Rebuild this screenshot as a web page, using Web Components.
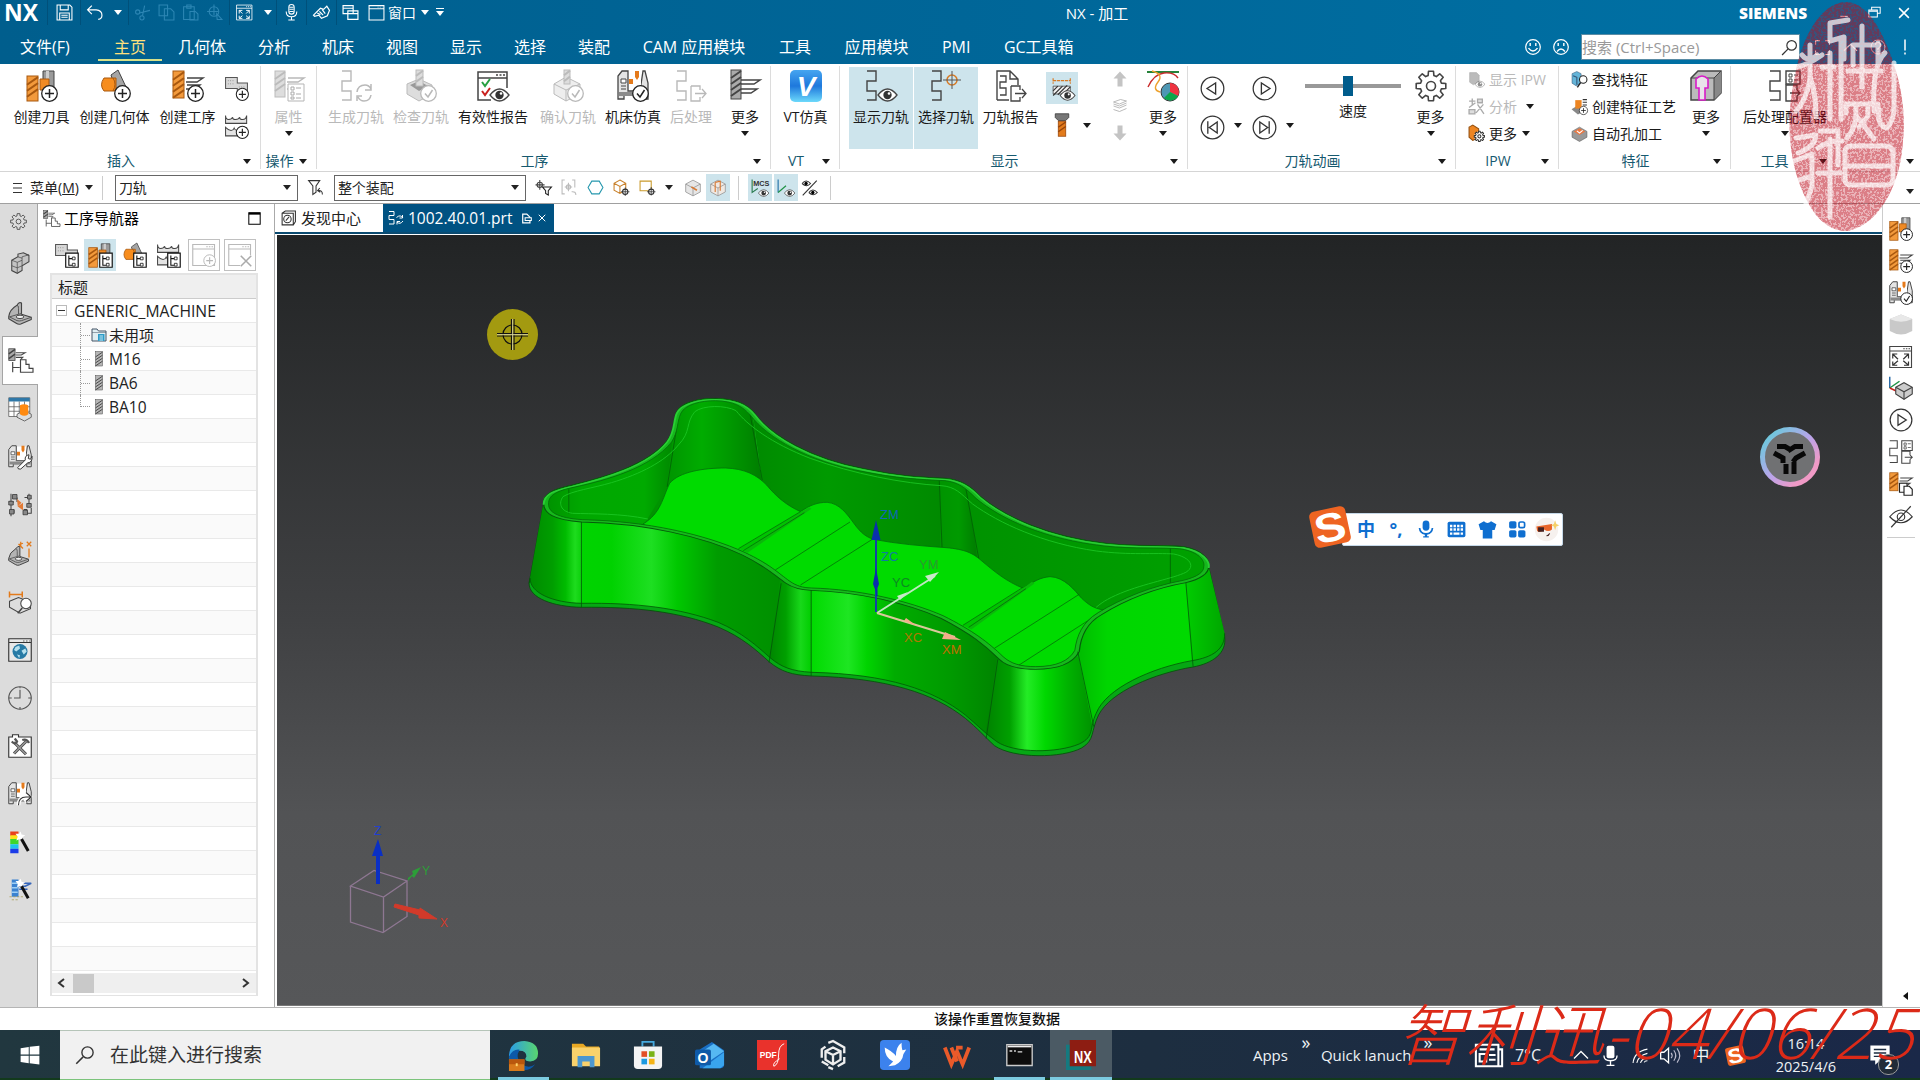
<!DOCTYPE html>
<html lang="zh-CN">
<head>
<meta charset="utf-8">
<title>NX - 加工</title>
<style>
  html, body { margin: 0; height: 1080px; overflow: hidden; }
  body {
    width: 1920px;
    display: flex;
    flex-direction: column;
    position: relative;
    background: #fff;
    color: #1a1a1a;
    font: 14px/20px "Open Sans", "Noto Sans CJK SC", sans-serif;
    white-space: nowrap;
  }
  main { display: flex; height: 803px; }
  .doc { width: 1608px; display: flex; flex-direction: column; border-left: 1px solid #aaa; box-sizing: border-box; }
</style>
</head>
<body>
  <nx-titlebar></nx-titlebar>
  <nx-menu-tabs></nx-menu-tabs>
  <nx-ribbon></nx-ribbon>
  <nx-selection-bar></nx-selection-bar>
  <main>
    <nx-resource-rail></nx-resource-rail>
    <nx-navigator></nx-navigator>
    <div class="doc">
      <nx-doc-tabs></nx-doc-tabs>
      <nx-viewport></nx-viewport>
    </div>
    <nx-side-rail></nx-side-rail>
  </main>
  <nx-status>该操作重置恢复数据</nx-status>
  <win-taskbar></win-taskbar>
  <nx-seal></nx-seal>
  <nx-watermark></nx-watermark>

<script>
// registers an element whose shadow root holds the given style and markup
function define(name, css, html) {
  customElements.define(name, class extends HTMLElement {
    constructor() {
      super();
      this.attachShadow({ mode: "open" });
      this.shadowRoot.innerHTML = `<style>${css}</style>${html}`;
    }
  });
}

// ---- icon parts, all on a 32 x 32 grid ----
const drill = (x, y, w, h, c = "#f39a3c", d = "#a8580f") => {
  let s = `<rect x="${x}" y="${y}" width="${w}" height="${h}" fill="${c}" stroke="${d}"/>`;
  for (let k = y + w * .7; k < y + h - 1; k += 6) s += `<path d="M${x} ${k + 1}L${x + w} ${k - w * .6}" stroke="${d}" stroke-width="2"/>`;
  return s;
};
const L = "#b9b9b9";
const badge = (inner, c = "#222") => `<circle cx="23.500" cy="23.500" r="7.800" fill="#fff" stroke="${c}" stroke-width="1.300"/><g stroke="${c}" stroke-width="1.500" fill="none">${inner}</g>`;
const plus = badge('<path d="M23.500 19v9M19 23.500h9"/>');
const check = badge('<path d="M20 23.500l3 3.500 4.500-7"/>');
const checkL = badge('<path d="M20 23.500l3 3.500 4.500-7"/>', L);
const eye = '<path d="M13 25q9.500-12 19 0q-9.500 12-19 0z" fill="#fff" stroke="#444" stroke-width="1.300"/><circle cx="22.500" cy="25" r="4.200" fill="#333"/><circle cx="24" cy="23.500" r="1.300" fill="#fff"/>';
const snake = (c = "#444") => `<path d="M2 1h9v10H2v10h9v9H2M2 30h9" fill="none" stroke="${c}" stroke-width="1.400"/>`;
const lines = (c = "#444") => `<path d="M15 8h16l-6 4H14M15 15h13l-5 4h-9" fill="none" stroke="${c}" stroke-width="1.400"/>`;
const holder = '<path d="M17 1h11v17H17z" fill="#9a9a9a" stroke="#444"/><path d="M20 1h3v17h-3z" fill="#ccc"/><path d="M14 9h9v11h-9z" fill="#f08a24" stroke="#a8580f"/>';
const part = '<path d="M12 5l7-5 8 17-5 7-5-3z" fill="#a5a5a5" stroke="#444"/><path d="M5 8h12v13H5q-5-6 0-13z" fill="#f78d1e" stroke="#a8580f"/><path d="M14 8q4 6 0 13" fill="none" stroke="#a8580f"/>';
const blocks = '<path d="M2 2h15v7h13v14H17v-7H2z" fill="#d7d7d7" stroke="#555" stroke-width="1.300"/><path d="M5 6h9M5 10h9M19 14h8M19 18h8" stroke="#777" stroke-dasharray="1 2"/>';
const wave = '<path d="M2 2v10h27V2q-1 5-5 5t-4-3q-1 3-5 3t-4-3q-1 3-5 3T2 2zM2 17v11h27V17q-1 4-4 4t-4-3q-1 3-4 3t-4-3q-1 3-4 3T2 17z" fill="#e4e4e4" stroke="#444" stroke-width="1.300"/>';
const machine = (c = "#444", o = "#e57a1a") => `<path d="M1 29V6l4-5h6v20h12l3-20h2l3 12v16h-6v-4H7v4z" fill="#e4e4e4" stroke="${c}" stroke-width="1.300"/><path d="M12 2h12v18H12z" fill="#fff"/><path d="M2 22h28v4H2z" fill="#8a8a8a"/><path d="M4 9h5v4H4zM4 16h5M4 19h5" fill="#fff" stroke="${c}"/><path d="M12 9h4v5h-4zM18 1h4v6l-2 3-2-3z" fill="${o}"/>`;
const tree = '<path d="M15 13h16v18H15z" fill="#fff" stroke="#111" stroke-width="1.500"/><path d="M19 16v12.500h4M19 20h4" fill="none" stroke="#111" stroke-width="1.400"/><path d="M23.500 18h3.500v3.500h-3.500zM23.500 26h3.500v3.500h-3.500z" fill="none" stroke="#111"/>';
const exportBox = (c = "#444") => `<path d="M16 16h9v4M25 27v4h-9V16" fill="none" stroke="${c}" stroke-width="1.300"/><path d="M20 23.500h11M27 19l4 4.500-4 4.500" fill="none" stroke="${c}" stroke-width="1.300"/>`;
const win = (c = "#444") => `<path d="M1 2h29v28H1zM1 8h29" fill="none" stroke="${c}" stroke-width="1.500"/><path d="M19 5h9" stroke="${c}" stroke-width="1.500" stroke-dasharray="2 1.500"/>`;
const cube = (f = "#cfcfcf", c = "#555") => `<path d="M16 2l13 7v14l-13 7-13-7V9z" fill="${f}" stroke="${c}" stroke-width="1.500"/><path d="M3 9l13 7 13-7M16 16v14" fill="none" stroke="${c}" stroke-width="1.500"/>`;
const ring = p => `<circle cx="16" cy="16" r="14.500" fill="none" stroke="#333" stroke-width="1.600"/><path d="${p}" fill="none" stroke="#333" stroke-width="1.700"/>`;
const bracket = '<path d="M1 22Q2 13 12 7q3-5 6-3v15l13 4v3l-14 6q-3 1-6-1L1 25z" fill="#b4b4b4" stroke="#444" stroke-width="1.500" stroke-linejoin="round"/><path d="M12 7q2 0 2 4v8L2 22.500M14 19l4-1M2 22.500l10 5q3 1 6 0l13-4.500" fill="none" stroke="#555" stroke-width="1.300"/><ellipse cx="16" cy="22.500" rx="5" ry="2.300" fill="#eee" stroke="#444" stroke-width="1.300"/>';
const gear = (c = "#444", w = 1.600) => {
  const p = [];
  for (let i = 0; i < 8; i++) for (const [da, r] of [[-.27, 10.800], [-.17, 15], [.17, 15], [.27, 10.800]]) {
    const a = i * Math.PI / 4 + da;
    p.push((16 + r * Math.cos(a)).toFixed(1) + "," + (16 + r * Math.sin(a)).toFixed(1));
  }
  return `<polygon points="${p.join(" ")}" fill="none" stroke="${c}" stroke-width="${w}" stroke-linejoin="round"/><circle cx="16" cy="16" r="4.500" fill="none" stroke="${c}" stroke-width="${w}"/>`;
};

const icons = {
  save: '<path d="M2 2h24l4 4v24H2zM8 2v9h15V2M7 30V17h18v13M10 21h12M10 25h12" fill="none" stroke="#fff" stroke-width="2"/>',
  undo: '<path d="M11 3L3 11l8 8M3 11h16q11 1 11 10 0 7-7 8" fill="none" stroke="#fff" stroke-width="2.200"/>',
  cut: '<g fill="none" stroke="#2c86b4" stroke-width="2"><circle cx="7" cy="15" r="4"/><circle cx="15" cy="26" r="4"/><path d="M10 17l20-5M16 22L20 3"/></g>',
  copy: '<path d="M2 2h16v20H2zM12 9h12l6 6v15H12z" fill="#00618f" stroke="#2c86b4" stroke-width="2"/>',
  paste: '<path d="M3 5h20v24H3zM9 2h8v6H9zM15 14h10l5 5v11H15z" fill="#00618f" stroke="#2c86b4" stroke-width="2"/>',
  target: '<g fill="none" stroke="#2c86b4" stroke-width="2"><circle cx="15" cy="14" r="9"/><path d="M15 1v20M2 14h22M20 18l10 11h-9z"/></g>',
  fitw: win("#fff") + '<path d="M12 12H6v6M6 12l6 6M19 12h6v6M25 12l-6 6M12 27H6v-5M6 27l6-5M19 27h6v-5M25 27l-6-5" fill="none" stroke="#fff" stroke-width="1.800"/>',
  mic: '<rect x="11" y="1" width="10" height="18" rx="5" fill="none" stroke="#fff" stroke-width="2"/><path d="M12 6h8M12 10h8M12 14h8M6 14q0 10 10 10t10-10M16 24v6M10 30h12" fill="none" stroke="#fff" stroke-width="2"/>',
  touch: '<path d="M1 21l13-13 6 2 6-6 5 8-4 10-11 5-5-6-8 2z" fill="none" stroke="#fff" stroke-width="2.300"/><path d="M12 14l7 7M17 10l6 8M8 17l6 3" stroke="#fff" stroke-width="2.300"/>',
  windows: '<path d="M2 3h19v15H2zM2 8h19M11 13h19v16H11zM11 18h19" fill="#006496" stroke="#fff" stroke-width="2.200"/>',
  window: '<path d="M2 3h28v27H2zM2 9h28" fill="none" stroke="#fff" stroke-width="2"/><path d="M18 6h9" stroke="#fff" stroke-dasharray="2"/>',
  smile: '<circle cx="16" cy="16" r="13" fill="none" stroke="#fff" stroke-width="2.200"/><path d="M11 9v5M21 9v5M8 18q8 10 16 0" fill="none" stroke="#fff" stroke-width="2.500"/>',
  sad: '<circle cx="16" cy="16" r="13" fill="none" stroke="#fff" stroke-width="2.200"/><path d="M11 9v5M21 9v5M9 24q7-9 14 0" fill="none" stroke="#fff" stroke-width="2.500"/>',
  search: '<circle cx="20" cy="12" r="9" fill="none" stroke="currentColor" stroke-width="2.200"/><path d="M13 19L2 30" stroke="currentColor" stroke-width="2.400"/>',
  full: '<path d="M3 11V3h8M21 3h8v8M29 21v8h-8M11 29H3v-8" fill="none" stroke="#fff" stroke-width="2"/>',
  caretup: '<path d="M2 23L16 9l14 14" fill="none" stroke="#fff" stroke-width="2.500"/>',
  help: '<circle cx="16" cy="16" r="14" fill="none" stroke="#fff" stroke-width="2"/><path d="M11 12q0-5 5-5t5 5-5 7v3M16 24v3" fill="none" stroke="#fff" stroke-width="2.300"/>',
  bang: '<path d="M16 1v22M16 27v4" stroke="#fff" stroke-width="3"/>',
  minimise: '<path d="M6 25h20" stroke="#fff" stroke-width="3"/>',
  restore: '<path d="M9 9V3h21v15h-6M2 10h21v17H2zM2 13h21" fill="none" stroke="#fff" stroke-width="2.500"/>',
  close: '<path d="M3 3l26 26M29 3L3 29" stroke="#fff" stroke-width="4"/>',

  newtool: holder + drill(1, 6, 11, 25) + plus,
  newgeom: part + plus,
  newop: drill(1, 1, 11, 27) + lines() + plus,
  newprog: blocks + plus,
  newmethod: wave + plus,
  props: drill(2, 1, 10, 26, "#ddd", "#bbb") + lines(L) + '<path d="M15 14h16v17H15z" fill="#fff" stroke="#b5b5b5"/><path d="M18 17h3v3h-3zM18 22h3v3h-3zM18 27h3v2h-3zM23 18h5M23 24h5M23 28h5" fill="none" stroke="#aaa"/>',
  generate: snake(L) + '<path d="M17 22q1-7 8-7 4 0 6 4M31 14v6h-6M31 25q-1 6-7 6-4 0-6-4M17 31v-5h5" fill="none" stroke="#b9b9b9" stroke-width="1.500"/>',
  checkpath: '<path d="M2 14l12-5 13 6v9l-13 7-12-7z" fill="#ddd" stroke="#bbb"/><path d="M5 15l9-4 9 5-9 5z" fill="#999"/>' + drill(11, 0, 7, 16, "#ddd", "#bbb") + checkL,
  report: win() + '<path d="M5 12l3 4 5-7" fill="none" stroke="#26a042" stroke-width="2"/><path d="M5 21l3 4 5-7" fill="none" stroke="#c9211e" stroke-width="2"/><path d="M14 18h18v14H14z" fill="#fff"/>' + eye,
  verify: '<path d="M2 14l12-7 14 7v10l-14 7-12-7z" fill="#eee" stroke="#bbb"/><path d="M2 14l12 6 14-6M14 20v11" fill="none" stroke="#bbb"/>' + drill(12, 0, 6, 14, "#ddd", "#bbb") + checkL,
  machine: machine() + check,
  post: snake(L) + exportBox(L),
  moreop: drill(2, 0, 10, 29, "#aaa", "#444") + '<path d="M12 10h19l-6 4H12M12 19h16l-6 4H12" fill="none" stroke="#444" stroke-width="1.500"/>',
  vt: '<defs><linearGradient id="v" x1="0" y1="0" x2="0" y2="1"><stop offset="0" stop-color="#46a5f0"/><stop offset=".5" stop-color="#1e78dc"/><stop offset="1" stop-color="#6cd9fb"/></linearGradient></defs><rect width="32" height="32" rx="5" fill="url(#v)"/><text x="16" y="26" text-anchor="middle" font-family="Liberation Sans" font-size="28" font-weight="bold" font-style="italic" fill="#fff">V</text>',
  showpath: snake() + eye,
  pickpath: snake() + '<circle cx="22" cy="10" r="5" fill="none" stroke="#d77a25" stroke-width="1.500"/><path d="M22 1v18M13 10h18" stroke="#555"/>',
  pathreport: '<path d="M2 30V1h13l8 8v6M15 1v8h8M2 30h12" fill="none" stroke="#444" stroke-width="1.400"/><path d="M5 6h6v6H5v6h6v7H5" fill="none" stroke="#444" stroke-width="1.300"/>' + exportBox(),
  hatch: '<path d="M4 6h22M4 3v7M26 3v7" stroke="#d77a25" stroke-width="1.500" stroke-dasharray="4 1"/><path d="M4 13h22v10H4z" fill="#f2f2f2" stroke="#444"/><path d="M4 19l6-6M4 25l12-12M10 24l12-12M20 20l6-6" stroke="#333" stroke-width="1.500"/>' + eye,
  bolt: '<path d="M7 1h18v5l-4 4H11L7 6z" fill="#777" stroke="#333"/>' + drill(11, 11, 10, 20, "#e27a1b", "#954409"),
  up: '<path d="M16 1l13 14h-8v16H11V15H3z" fill="#c4c4c4"/>',
  down: '<path d="M16 31l13-14h-8V1H11v16H3z" fill="#c4c4c4"/>',
  layers: '<path d="M3 8l14-5 12 3-14 6zM3 16l12 4 14-6M3 23l12 4 14-6M3 12l12 4 14-6" fill="none" stroke="#aaa" stroke-width="1.600"/>',
  moreshow: '<path d="M0 2h32" stroke="#26823a" stroke-width="2"/><path d="M1 17Q7 4 17 3t14 5" fill="none" stroke="#c92a2a" stroke-width="1.400"/><path d="M5 1q12 3 6 11t2 10" fill="none" stroke="#eda12c" stroke-width="1.400"/><circle cx="23" cy="22" r="9" fill="#4d97b4" stroke="#333"/><path d="M23 22V13a9 9 0 0 1 8 13z" fill="#ef3340"/><path d="M23 22l8 4a9 9 0 0 1-14 2z" fill="#0ca64a"/>',
  prev: ring("M20 9v14L9 16z"), play: ring("M12 9v14l11-7z"),
  first: ring("M10 8v16M22 9v14l-10-7z"), last: ring("M22 8v16M10 9v14l10-7z"),
  gear: gear(),
  showipw: '<path d="M3 3h13l5 5v12L10 26 3 21z" fill="#bbb" stroke="#aaa"/><g opacity=".55">' + eye + '</g>',
  analyse: '<path d="M2 6h12M8 1v12M2 18l12-9M18 2h9v7h-9zM2 22h11v8H2zM18 12l12 18M29 12L15 28" fill="#ddd" stroke="#aaa" stroke-width="2.500"/>',
  moreipw: '<path d="M2 4l7-4 11 7v17L9 29 2 23z" fill="#ed8522" stroke="#94500f" stroke-width="2"/><g transform="translate(11 11) scale(.65)"><circle cx="16" cy="16" r="15" fill="#fff"/>' + gear("#333", 3) + '</g>',
  findf: '<path d="M2 5l9-4 8 4v17l-9 6-8-5z" fill="#64b4d8" stroke="#357"/><path d="M4 9l7 3v14" fill="none" stroke="#357" stroke-width="2"/><circle cx="23" cy="16" r="7" fill="#fff" stroke="#222" stroke-width="2"/><path d="M18 22l-6 9" stroke="#222" stroke-width="2.500"/>',
  createf: '<path d="M1 21l10-6 14 4v6l-12 6z" fill="#888"/><path d="M8 4h12v16H8z" fill="#ed8522"/><path d="M22 3h8M22 8h8M22 13h8" stroke="#333" stroke-width="2"/>' + plus,
  autohole: '<path d="M2 12l14-8 14 8v11l-14 8-14-8z" fill="#999" stroke="#555"/><path d="M5 12l11-6 11 6-11 7z" fill="#e87842"/><path d="M11 11l5 4 6-5" fill="none" stroke="#fff" stroke-width="2"/>',
  hole: '<path d="M1 8l7-7h23v22l-7 7H1z" fill="#bbb" stroke="#444" stroke-width="1.500"/><path d="M24 8l7-7v22l-7 7z" fill="#888"/><path d="M1 8h23v22M24 8l7-7" fill="none" stroke="#444"/><path d="M6 18v-9q6-6 12 0v9h-3v12H9V18z" fill="#e9e2ea" stroke="#d81bc8" stroke-width="1.600"/>',
  postcfg: '<path d="M1 1h10v10H1v10h10v9H1" fill="none" stroke="#444" stroke-width="1.400"/><path d="M17 1h14v13H17z" fill="#fff" stroke="#444" stroke-width="1.400"/><path d="M20 4h3v3h-3zM20 9h3v3h-3zM25 5h4M25 10h4" fill="none" stroke="#444"/><path d="M28 20v-5H17v16h11v-5M21 23h10M28 20l3 3-3 3" fill="none" stroke="#444" stroke-width="1.400"/>',

  funnel: '<path d="M3 3h21l-7 10v12l-6 4V13z" fill="none" stroke="#333" stroke-width="2"/><path d="M20 22q9-2 9 7M24 17l-4 5 5 3" fill="none" stroke="#333" stroke-width="2"/>',
  snapf: '<path d="M9 2v18M1 11h17" stroke="#444" stroke-width="2"/><circle cx="9" cy="11" r="5" fill="none" stroke="#444" stroke-width="2"/><path d="M14 15h17l-6 7v8l-5-3v-5z" fill="#fff" stroke="#222" stroke-width="2"/>',
  snapb: '<path d="M7 2H2v26h5M21 2h5v14M14 7v16M7 15h14M20 24q8-1 8 6" fill="none" stroke="#bbb" stroke-width="2"/><circle cx="14" cy="15" r="4" fill="none" stroke="#bbb" stroke-width="2"/>',
  hex: '<path d="M9 4h14l7 12-7 12H9L2 16z" fill="none" stroke="#2597ad" stroke-width="2"/>',
  boxp: '<path d="M13 2l11 6v13l-11 6-11-6V8zM2 8l11 6 11-6M13 14v13" fill="none" stroke="#c9822c" stroke-width="2"/><circle cx="23" cy="24" r="5" fill="#fff" stroke="#333" stroke-width="2"/><path d="M23 16v16M15 24h16" stroke="#333" stroke-width="1.500"/>',
  rectp: '<path d="M2 4h21v18H2z" fill="none" stroke="#c99a2c" stroke-width="2"/><circle cx="23" cy="24" r="5" fill="#fff" stroke="#333" stroke-width="2"/><path d="M23 15v16M15 24h16" stroke="#333" stroke-width="1.500"/>',
  cube1: cube("#e6e6e6", "#999") + '<path d="M13 14l10 6" stroke="#d77a35" stroke-width="3"/>',
  cube2: cube("#efe8e2", "#999") + '<path d="M11 6v17M11 6l9-2v17" fill="none" stroke="#d77a35" stroke-width="2"/>',
  mcs: '<text x="4" y="12" font-family="Liberation Sans" font-size="13" font-weight="bold" fill="#333">MCS</text><path d="M2 1v23l10-7" fill="none" stroke="#2d7d52" stroke-width="2"/>' + eye,
  mcs2: '<path d="M2 1v23" stroke="#2270a8" stroke-width="2"/><path d="M2 24l14-12" stroke="#1c9143" stroke-width="2"/>' + eye,
  eyes: '<path d="M2 8q7-9 15 0-7 8-15 0M14 24q7-9 15 0-7 8-15 0" fill="none" stroke="#333" stroke-width="2"/><circle cx="21" cy="24" r="3"/><circle cx="9" cy="8" r="3"/><path d="M3 29L28 3" stroke="#333" stroke-width="2"/>',

  asm: '<path d="M4 12l9-5V3l8-2 8 4v9l-10 6v7l-7 4-8-4z" fill="#c4c4c4" stroke="#444" stroke-width="1.500"/><path d="M4 12l8 3 7-3V7l10-3M12 15v15M19 12v7M4 20l8 3 7-3M13 7l6 2" fill="none" stroke="#444"/>',
  bracket,
  opnav: drill(1, 1, 8, 15, "#aaa", "#444") + '<path d="M10 6h12l-5 3h-7M10 12h9l-3 3" fill="none" stroke="#444" stroke-width="1.300"/><path d="M6 18v13M6 25h9M16 31V15h7v6h4v5h5v5z" fill="none" stroke="#444" stroke-width="1.500"/>',
  table: '<path d="M1 1h28v25H1z" fill="#fff" stroke="#555"/><path d="M1 1h28v5H1z" fill="#2f78a8"/><path d="M1 13h28M1 19h28M8 6v20M15 6v20M22 6v20" stroke="#555"/><path d="M12 23l10-5 9 5v4l-9 5-10-5z" fill="#ddd" stroke="#444"/><path d="M16 11q5-3 11 0v12q-5 4-11 0z" fill="#ff8a10"/>',
  machtool: machine() + '<path d="M13 30l10-10q-1-6 5-7l-1 5 3 1 2-4q1 8-6 9l-9 8q-4 1-4-2z" fill="#fff" stroke="#333" stroke-width="1.300"/>',
  dep: '<path d="M4 1v30M1 12h7M12 6v6M22 6h8M28 1v18M21 22h4v5h6V20M8 27v-5" fill="none" stroke="#444" stroke-width="1.400"/><path d="M6 2h6v6H6zM1 11h6v5H1zM2 22h6v6H2zM26 3h5v5h-5zM25 14h6v5h-6zM20 23h6v6h-6z" fill="#888" stroke="#333"/><path d="M12 8l6 5-5 5zM20 13v10l-7-5z" fill="#e27a35"/>',
  pmi: '<g transform="translate(0 4) scale(.88)">' + bracket + '</g><path d="M14 4l6 6M20 3l-6 2M28 10v12M25 1l6 6M31 1l-6 6M17 1v7" fill="none" stroke="#e27a1b" stroke-width="1.700"/>',
  measure: '<path d="M2 15l12-5 16 6v9l-14 6-14-8z" fill="#ddd" stroke="#444" stroke-width="1.400"/><path d="M2 6h17M2 2v8M19 2v8" stroke="#e27a1b" stroke-width="2"/><circle cx="24" cy="18" r="7" fill="#fff" stroke="#444" stroke-width="1.400"/><path d="M19 24l-6 7" stroke="#444" stroke-width="2"/>',
  globe: '<path d="M1 1h30v30H1zM1 6h30" fill="#e8e8e8" stroke="#333" stroke-width="1.500"/><path d="M20 4h9" stroke="#333" stroke-dasharray="2"/><circle cx="16" cy="18" r="10" fill="#277aa5"/><path d="M10 12l5-2 1 4-5 4-3-2zM18 17l5-3 2 4-4 4zM12 22l4 1-1 4z" fill="#b5e0ee"/>',
  clock: '<circle cx="16" cy="16" r="15" fill="none" stroke="#555" stroke-width="1.500"/><path d="M16 5v11H8M1 16h4M27 16h4M16 28v3M16 1v2" fill="none" stroke="#555" stroke-width="1.500"/>',
  tools: '<path d="M1 4h5V1h8v3h17v27H1z" fill="#fff" stroke="#333" stroke-width="1.500"/><path d="M8 11l16 16M24 10L8 26" stroke="#444" stroke-width="4"/><path d="M8 11l16 16M24 10L8 26" stroke="#999" stroke-width="2"/><path d="M5 10q5 5 7 0l-3-4M19 8q6-2 9 4" fill="none" stroke="#555" stroke-width="3"/>',
  machout: machine() + '<path d="M14 31q0-11 10-11M22 15l7 5-7 6" fill="none" stroke="#fff" stroke-width="5"/><path d="M14 31q0-11 10-11h6M24 14l7 6-7 6" fill="none" stroke="#333" stroke-width="1.500"/>',
  wand1: '<path d="M3 2h11v6H3z" fill="#e8401c"/><path d="M3 7h11v6H3z" fill="#fce21c"/><path d="M3 12h11v7H3z" fill="#3ed62c"/><path d="M3 19h11v6H3z" fill="#1cc4ed"/><path d="M3 25h11v6H3z" fill="#1c3ce8"/><path d="M17 2l1 4 5 1-4 3 1 5-4-3-5 2 2-5-3-4h5z" fill="#fff"/><path d="M18 12l9 16" stroke="#111" stroke-width="4"/>',
  wand2: '<path d="M5 2h9v23H5z" fill="#3b82d0"/><path d="M5 7h8M5 13h8M5 19h8" stroke="#9fd0f5" stroke-width="2"/><path d="M15 7h16l-8 4h-8M15 15h11" fill="none" stroke="#3565ba" stroke-width="2"/><path d="M17 1l1 4 5 1-4 3 1 5-4-3-4 1 1-4-3-4h4z" fill="#fff"/><path d="M18 11l9 16" stroke="#111" stroke-width="4"/><path d="M2 25h18M5 29h10" stroke="#a89a4c" stroke-dasharray="3 2"/>',
  vprog: blocks + tree, vtool: holder + drill(1, 6, 11, 25) + tree, vgeom: part + tree, vmethod: wave + tree,
  winadd: win(L) + badge('<path d="M23.500 19v9M19 23.500h9"/>', L),
  winx: win(L) + '<path d="M16 16h16v16H16z" fill="#fff"/><path d="M17 17l14 14M31 17L17 31" stroke="#aaa" stroke-width="2"/>',
  folder: '<path d="M2 28V4h10l3 4h15v20z" fill="#dfeef2" stroke="#456" stroke-width="2"/><path d="M2 11h28" stroke="#456"/><path d="M14 14h13v14H14z" fill="#2c9cc8"/><path d="M17 18h7M17 22h7M17 26h7" stroke="#fff" stroke-width="1.500"/>',
  tooli: drill(9, 1, 14, 29, "#b5b5b5", "#4a4a4a"),
  maxbox: '<path d="M2 2h28v28H2z" fill="none" stroke="#000" stroke-width="2.500"/><path d="M2 4h28" stroke="#000" stroke-width="5"/>',
  tabpart: '<path d="M2 3h10v8H2v8h10v9H2" fill="none" stroke="#fff" stroke-width="2"/><path d="M17 15q8-7 13 1M29 10v6h-6M30 22q-6 8-12 2M18 29v-6h6" fill="none" stroke="#fff" stroke-width="2"/>',
  compass: '<path d="M4 6h21v22H4zM4 6l6-4h19v20l-4 6" fill="none" stroke="#333" stroke-width="2"/><circle cx="14" cy="17" r="7" fill="#fff" stroke="#333" stroke-width="2"/><path d="M11 20l6-7" stroke="#333" stroke-width="2"/>',
  tabdoc: '<path d="M5 3h12l9 9v17H5z" fill="none" stroke="#fff" stroke-width="3.500"/><path d="M12 14h18v8H12z" fill="#005282" stroke="#fff" stroke-width="3"/>',
  solid: '<path d="M1 8l15-6 15 6v16q-15 9-30 0z" fill="#c9c9c9"/><path d="M1 8l15-6 15 6q-15 7-30 0z" fill="#e8e8e8"/>',
  fit: win() + '<path d="M11 12H5v6M5 12l7 7M20 12h6v6M26 12l-7 7M11 27H5v-5M5 27l7-6M20 27h6v-5M26 27l-7-6" fill="none" stroke="#333" stroke-width="1.600"/>',
  orient: '<path d="M1 1v15" stroke="#2c6ca8" stroke-width="2"/><path d="M1 16L14 7" stroke="#1c9143" stroke-width="2"/><path d="M1 16l13 6" stroke="#c9211e" stroke-width="2"/><path d="M9 15l11-6 11 6v9l-11 7-11-7z" fill="#ccc" stroke="#444" stroke-width="1.500"/><path d="M9 15l11 6 11-6M20 21v10" fill="none" stroke="#444" stroke-width="1.500"/>',
  copyop: drill(1, 1, 11, 24) + lines() + '<path d="M14 15h10v12H14z" fill="#fff" stroke="#222" stroke-width="1.500"/><path d="M20 19h7l4 4v8H20z" fill="#fff" stroke="#222" stroke-width="1.500"/>',
  noeye: '<path d="M1 17q15-18 30 0-15 16-30 0z" fill="none" stroke="#333" stroke-width="1.500"/><circle cx="16" cy="17" r="5" fill="none" stroke="#333" stroke-width="1.500"/><path d="M3 31L29 3" stroke="#333" stroke-width="1.500"/>',

  start: '<path d="M1 5l13-2v12H1zM15.500 2.800L31 1v14H15.500zM1 17h13v12L1 27zM15.500 17H31v14l-15.500-2z" fill="#fff"/>',
  edge: '<defs><linearGradient id="e"><stop offset="0" stop-color="#2a9be8"/><stop offset="1" stop-color="#59d66e"/></linearGradient></defs><path d="M1 16Q2 1 17 1q14 1 14 13 0 9-10 8-5-1-2-5 0-6-7-6-9 1-11 10z" fill="url(#e)"/><path d="M1 17q4-8 11-7-5 8 2 15 8 5 14 0-5 7-13 6Q2 29 1 17z" fill="#0c59a8"/><path d="M1 20h16v12H1z" fill="#d87a1c"/><path d="M1 20h16v5H1z" fill="#b9570d"/><path d="M8 24h2v3H8z" fill="#ffd36a"/>',
  explorer: '<path d="M1 4h12l3 3h14v20H1z" fill="#e8a823"/><path d="M1 8h30v20H1z" fill="#fad26b"/><path d="M7 29V17h18v12h-5v-6h-8v6z" fill="#4c97cf"/>',
  store: '<path d="M10 7V2h12v5" fill="none" stroke="#46a9dd" stroke-width="2"/><path d="M1 7h30v20q0 4-4 4H5q-4 0-4-4z" fill="#f4f4f4"/><path d="M9 12h6v6H9z" fill="#e34f26"/><path d="M17 12h6v6h-6z" fill="#7ab317"/><path d="M9 20h6v6H9z" fill="#1c9ae0"/><path d="M17 20h6v6h-6z" fill="#f5b417"/>',
  outlook: '<path d="M5 10L18 2l13 9v15q0 4-4 4H5z" fill="#1a6fc4"/><path d="M8 12l12-8 11 8-15 10z" fill="#56b8f2"/><path d="M8 30l23-17v14l-4 3z" fill="#39a4ee"/><rect y="10" width="17" height="17" rx="2" fill="#0f5aa8"/><text x="8.500" y="24" text-anchor="middle" font-family="Liberation Sans" font-size="15" font-weight="bold" fill="#fff">O</text>',
  pdf: '<path d="M0 0h32v32H0z" fill="#e9322c"/><text x="3" y="19" font-family="Liberation Sans" font-size="9" font-weight="bold" fill="#fff">PDF</text><path d="M29 4q-6 2-6 12t-5 12q-2-3 6-8" fill="none" stroke="#fff"/>',
  hexcube: '<path d="M11 3l5-2 12 7v6M28 18v6l-7 4M11 29l5 2M4 19v-9l4-3M4 23l7 4M16 8l8 4v9l-8 5-8-5v-9zM8 12l8 4 8-4M16 16v10" fill="none" stroke="#eee" stroke-width="2.500"/>',
  bird: '<rect x="0" y="0" width="32" height="32" rx="4" fill="#3c82ed"/><path d="M5 8q8 4 12 9 0-10 6-14 0 6 1 8l4-1-3 5q-1 8-9 12l-7 1 5-5q-9-4-9-15z" fill="#fff"/>',
  wps: '<path d="M3 8l7 18 6-14 6 14 7-18M10 8l6 15M22 8h-7" fill="none" stroke="#ea5a2a" stroke-width="4"/>',
  cmd: '<path d="M2 4h28v23H2z" fill="#0d0d0d" stroke="#ccc" stroke-width="1.500"/><path d="M3 5h26v2H3z" fill="#eee"/><path d="M5 11h3M10 11h2M14 12h5" stroke="#ddd" stroke-width="1.500"/>',
  nx: '<path d="M0 5h27v27H0z" fill="#147a80"/><path d="M4 0h28v28H4z" fill="#8d1d12"/><text x="18" y="24" text-anchor="middle" font-family="Liberation Sans" font-size="17" font-weight="bold" fill="#fff" textLength="19" lengthAdjust="spacingAndGlyphs">NX</text>',
  news: '<path d="M2 5h24v23H2zM26 10h4v18h-4M6 10h16M6 15h7v8H6zM16 16h7M16 21h7" fill="none" stroke="#fff" stroke-width="2.200"/>',
  tmic: '<rect x="10" y="1" width="12" height="19" rx="3" fill="#fff"/><path d="M6 16q0 8 10 8t10-8M16 24v6M10 31h12" fill="none" stroke="#fff" stroke-width="2"/>',
  wifi: '<path d="M2 30Q4 9 29 4M9 30q3-14 20-18M16 30q2-8 13-10M23 29q1-3 6-3" fill="none" stroke="#fff" stroke-width="2"/>',
  vol: '<path d="M1 11h5l7-6v22l-7-6H1z" fill="none" stroke="#fff" stroke-width="2"/><path d="M17 12q3 4 0 8M21 8q6 8 0 16M26 5q8 11 0 22" fill="none" stroke="#bbc" stroke-width="1.800"/>',
  sogou: '<g transform="rotate(-12 16 16)"><rect x="2" y="2" width="28" height="28" rx="4" fill="#ee6422"/><text x="16" y="27" text-anchor="middle" font-family="Liberation Sans" font-size="31" font-weight="bold" fill="#fff" textLength="24" lengthAdjust="spacingAndGlyphs">S</text></g>',
  notif: '<path d="M2 2h28v22H16l-7 6v-6H2z" fill="#fff"/><path d="M7 8h18M7 13h18M7 18h11" stroke="#1b2b40" stroke-width="2"/>',

  imic: '<g fill="#0f6fd0"><rect x="10" y="1" width="12" height="18" rx="6"/><path d="M3 14h3q1 9 10 9t10-9h3q-1 10-11 12v3h3v2H11v-2h3v-3Q4 24 3 14z"/></g>',
  ikey: '<rect x="1" y="3" width="30" height="26" rx="3" fill="#0f6fd0"/><path d="M5 10h22M5 16h22" stroke="#fff" stroke-width="4" stroke-dasharray="4 2"/><path d="M5 23h4M11 23h10M23 23h4" stroke="#fff" stroke-width="4"/>',
  ishirt: '<path d="M10 2q6 6 12 0l9 5-3 10h-4v14H8V17H4L1 7z" fill="#0f6fd0"/>',
  iapps: '<g fill="#0f6fd0"><rect x="2" y="2" width="13" height="13" rx="3"/><rect x="2" y="18" width="13" height="13" rx="3"/><rect x="18" y="18" width="13" height="13" rx="3"/></g><rect x="19.500" y="3.500" width="10" height="10" rx="3" fill="none" stroke="#0f6fd0" stroke-width="3"/>',
  iface: '<circle cx="16" cy="16" r="15" fill="#f6f1ee"/><path d="M3 12l20-3v7q-5 4-10 0-5 5-9 2z" fill="#e8652a"/><path d="M6 14h6v4H6zM16 24q3 0 4-3" fill="#422" stroke="#422" stroke-width="1.500"/><path d="M27 4l1.500 5 4 1.500-4 1.500L27 17l-1.500-5-3.500-1.500L25.500 9z" fill="#f5d068"/>'
};

// <nx-icon name="gear" size="24" cell="30">
class NxIcon extends HTMLElement {
  constructor() {
    super();
    this.attachShadow({ mode: "open" });
  }
  connectedCallback() {
    const size = this.getAttribute("size") || 32;
    const cell = this.getAttribute("cell") || size;
    this.shadowRoot.innerHTML = `
      <style>
        :host { display: flex; flex: none; width: ${cell}px; justify-content: center; align-items: center; }
        svg { display: block; overflow: visible; }
      </style>
      <svg width="${size}" height="${size}" viewBox="0 0 32 32">${icons[this.getAttribute("name")] || ""}</svg>`;
  }
}
customElements.define("nx-icon", NxIcon);

// small drop-down triangle
customElements.define("nx-arrow", class extends HTMLElement {
  connectedCallback() {
    if (this.shadowRoot) return;
    this.attachShadow({ mode: "open" });
    this.shadowRoot.innerHTML = `
      <style>
        :host { display: flex; flex: none; justify-content: center; align-items: center; width: ${this.getAttribute("cell")}px; }
        i { border: 4.500px solid transparent; border-top: 5px solid currentColor; border-bottom: 0; }
      </style><i></i>`;
  }
});

const ic = (name, size, cell) => `<nx-icon name="${name}" size="${size || 32}" cell="${cell || size || 32}"></nx-icon>`;
const ar = cell => `<nx-arrow cell="${cell || 8}"></nx-arrow>`;

define("nx-titlebar", `
  :host { display: flex; align-items: center; height: 25px; padding-bottom: 5px; color: #fff; background: linear-gradient(90deg, #005e8d, #006698 50%, #0072a6); }
  b { font: bold 23px/25px "Open Sans"; width: 43px; padding-left: 4px; }
  i { width: 1px; height: 25px; background: #00507a; }
  .title { width: 160px; text-align: center; font-size: 15px; margin-left: 573px; }
  .brand { width: 70px; font: 800 15.500px/22px "Open Sans"; padding: 0; margin-left: 562px; }
`, `<b>NX</b><i></i>${ic("save", 17, 32)}<i></i>${ic("undo", 17, 27)}${ar(20)}<i></i>
  <nx-icon name="cut" size="17" cell="24" style="margin-left:1px"></nx-icon>${ic("copy", 17, 24)}${ic("paste", 17, 24)}${ic("target", 17, 24)}
  <i style="margin-left:3px"></i>${ic("fitw", 17, 29)}${ar(17)}<i></i>${ic("mic", 17, 29)}<i></i>${ic("touch", 17, 29)}<i></i>
  ${ic("windows", 17, 27)}${ic("window", 17, 24)}<span>窗口</span>${ar(18)}<span style="border-top:1px solid;height:8px;display:flex;margin-left:2px">${ar(8)}</span>
  <span class="title">NX - 加工</span><b class="brand">SIEMENS</b>
  <nx-icon name="minimise" size="12" cell="24" style="margin-left:23px"></nx-icon>${ic("restore", 13, 36)}${ic("close", 12, 24)}`);

define("nx-menu-tabs", `
  :host { display: flex; height: 34px; color: #fff; background: linear-gradient(90deg, #005e8d, #006698 50%, #0072a6); font-size: 16px; line-height: 35px; }
  a { padding: 0 16px; height: 34px; flex: none; }
  .file { padding: 0 26px 0 20px; width: 52px; }
  .wide { padding: 0 17px 0 16.500px; }
  .on { color: #ffe17d; border-bottom: 2px solid #d6e08a; height: 29px; line-height: 35px; }
  .right { margin-left: auto; display: flex; align-items: center; padding-right: 1px; }
  .find { width: 217px; height: 24px; border: 1px solid #5a8ca5; background: #fff; color: #999; font-size: 15px; line-height: 25px; display: flex; margin: 0 8px 0 6px; }
  .find span { flex: 1; } .find nx-icon { color: #333; }
`, `${["文件(F)", "主页", "几何体", "分析", "机床", "视图", "显示", "选择", "装配", "CAM 应用模块", "工具", "应用模块", "PMI", "GC工具箱"].map((t, i) => `<a class="${["file", "on"][i] || (i > 8 ? "wide" : "")}">${t}</a>`).join("")}
  <div class="right">${ic("smile", 18, 28)}${ic("sad", 18, 28)}<div class="find"><span>搜索 (Ctrl+Space)</span>${ic("search", 17, 20)}</div>
  ${ic("full", 17, 28)}${ic("caretup", 15, 28)}${ic("help", 16, 27)}${ic("bang", 16, 28)}</div>`);

// big ribbon command: icon above, caption below
customElements.define("nx-command", class extends HTMLElement {
  connectedCallback() {
    if (this.shadowRoot) return;
    this.attachShadow({ mode: "open" });
    this.shadowRoot.innerHTML = `
      <style>
        :host { display: flex; flex: none; flex-direction: column; align-items: center; width: ${this.getAttribute("w")}px; height: 82px; margin-top: 3px; padding-top: 3px; box-sizing: border-box; }
        :host([on]) { background: #cde4ec; }
        :host([off]) { color: #b9b9b9; }
        span { margin: 5px 0 4px; }
        nx-arrow { color: #1a1a1a; }
      </style>
      ${ic(this.getAttribute("icon"))}<span><slot></slot></span>${this.hasAttribute("more") ? ar() : ""}`;
  }
});

customElements.define("nx-group", class extends HTMLElement {
  connectedCallback() {
    if (this.shadowRoot) return;
    this.attachShadow({ mode: "open" });
    this.shadowRoot.innerHTML = `
      <style>
        :host { display: flex; flex: none; flex-direction: column; box-sizing: border-box; width: ${this.getAttribute("w")}px; border-right: 1px solid #dcdcdc; height: 103px; margin-top: 2px; }
        .body { display: flex; flex: 1; margin-top: -2px; }
        .foot { display: flex; height: 20px; color: #16596f; padding-right: 8px; margin-bottom: -2px; }
        .foot span { flex: 1; text-align: center; }
        nx-arrow { color: #1a1a1a; }
      </style>
      <div class="body"><slot></slot></div>
      <div class="foot"><span>${this.getAttribute("label")}</span>${ar(10)}</div>`;
  }
});

const cmd = (icon, w, text, flags = "") => `<nx-command icon="${icon}" w="${w}" ${flags}>${text}</nx-command>`;
define("nx-ribbon", `
  :host { display: flex; height: 107px; border-bottom: 1px solid #d5d5d5; background: #fff; }
  .col { display: flex; flex-direction: column; align-items: center; flex: none; }
  .row { display: flex; align-items: center; height: 27px; gap: 4px; }
  .off { color: #b9b9b9; } .off nx-arrow { color: #1a1a1a; }
  .hl { background: #cde4ec; width: 32px; height: 32px; display: flex; justify-content: center; }
  .slider { height: 20px; width: 96px; display: flex; align-items: center; background: linear-gradient(#999, #999) center / 96px 4px no-repeat; margin-top: 12px; }
  .slider i { width: 10px; height: 20px; background: #005c8c; margin-left: 38px; }
`, `
  <nx-group w="261" label="插入"><div style="width:5px"></div>${cmd("newtool", 73, "创建刀具")}${cmd("newgeom", 73, "创建几何体")}${cmd("newop", 73, "创建工序")}
    <div class="col" style="padding-top:12px;gap:13px">${ic("newprog", 25)}${ic("newmethod", 25)}</div></nx-group>
  <nx-group w="56" label="操作">${cmd("props", 55, "属性", "off more")}</nx-group>
  <nx-group w="454" label="工序"><div style="width:8px"></div>${cmd("generate", 64, "生成刀轨", "off")}${cmd("checkpath", 66, "检查刀轨", "off")}${cmd("report", 78, "有效性报告")}${cmd("verify", 72, "确认刀轨", "off")}${cmd("machine", 58, "机床仿真")}${cmd("post", 58, "后处理", "off")}${cmd("moreop", 50, "更多", "more")}</nx-group>
  <nx-group w="69" label="VT">${cmd("vt", 69, "VT仿真")}</nx-group>
  <nx-group w="348" label="显示"><div style="width:9px"></div>${cmd("showpath", 64, "显示刀轨", "on")}<div style="width:1px"></div>${cmd("pickpath", 64, "选择刀轨", "on")}${cmd("pathreport", 65, "刀轨报告")}
    <div class="col" style="padding:8px 3px 0 3px;gap:9px"><span class="hl">${ic("hatch", 25)}</span>${ic("bolt", 24)}</div>
    <div class="col" style="padding-top:59px">${ar(12)}</div>
    <div class="col" style="width:54px;padding-top:7px;gap:11px">${ic("up", 16)}${ic("layers", 16)}${ic("down", 16)}</div>
    ${cmd("moreshow", 32, "更多", "more")}</nx-group>
  <nx-group w="268" label="刀轨动画">
    <div class="col" style="padding:12px 0 0 12px;gap:14px">${ic("prev", 25)}${ic("first", 25)}</div>
    <div class="col" style="padding:59px 9px 0 8px">${ar(10)}</div>
    <div class="col" style="padding-top:12px;gap:14px">${ic("play", 25)}${ic("last", 25)}</div>
    <div class="col" style="padding:59px 10px 0 8px">${ar(10)}</div>
    <div class="col"><div class="slider"><i></i></div><span style="margin-top:5px">速度</span></div>
    <div style="width:6px"></div>${cmd("gear", 49, "更多", "more")}</nx-group>
  <nx-group w="103" label="IPW"><div style="padding:2px 0 0 12px">
    <div class="row off">${ic("showipw", 17)}显示 IPW</div><div class="row off">${ic("analyse", 17)}分析 <nx-arrow cell="18"></nx-arrow></div><div class="row">${ic("moreipw", 17)}更多${ar(10)}</div></div></nx-group>
  <nx-group w="172" label="特征"><div style="padding:2px 0 0 12px;width:112px">
    <div class="row">${ic("findf", 17)}查找特征</div><div class="row">${ic("createf", 17)}创建特征工艺</div><div class="row">${ic("autohole", 17)}自动孔加工</div></div>${cmd("hole", 46, "更多", "more")}</nx-group>
  <nx-group w="105" label="工具" style="border:0"><div style="width:4px"></div>${cmd("postcfg", 100, "后处理配置器", "more")}</nx-group>
  <div style="display:flex;margin:87px 5px 0 auto;height:20px">${ar(10)}</div>`);

define("nx-selection-bar", `
  :host { display: flex; align-items: center; height: 31px; border-bottom: 1px solid #a0a0a0; background: #fff; color: #222; }
  .combo { box-sizing: border-box; height: 26px; border: 1px solid #666; display: flex; align-items: center; padding: 0 5px 0 3px; justify-content: space-between; }
  i { width: 1px; height: 24px; background: #ccc; }
  .hl { background: #cde4ec; height: 27px; display: flex; }
`, `<svg width="30" height="20"><path d="M13 5.500h9M13 10h9M13 14.500h9" stroke="#333" stroke-width="1.200"/></svg><span>菜单(<u>M</u>)</span>${ar(20)}<i style="margin-left:3px"></i>
  <div class="combo" style="width:183px;margin-left:12px">刀轨${ar(10)}</div>${ic("funnel", 17, 36)}
  <div class="combo" style="width:192px">整个装配${ar(10)}</div><span style="width:5px"></span>
  ${ic("snapf", 17, 26)}${ic("snapb", 17, 26)}${ic("hex", 17, 26)}${ic("boxp", 17, 26)}${ic("rectp", 17, 26)}${ar(16)}<span style="width:3px"></span>${ic("cube1", 18, 26)}<span class="hl">${ic("cube2", 18, 24)}</span>
  <i style="margin:0 9px 0 8px"></i><span class="hl">${ic("mcs", 18, 24)}</span><span style="width:2px"></span><span class="hl">${ic("mcs2", 18, 24)}</span>${ic("eyes", 18, 24)}<i style="margin-left:8px"></i>
  <span style="margin:8px 5px 0 auto">${ar(10)}</span>`);

define("nx-resource-rail", `
  :host { display: flex; flex-direction: column; width: 37px; background: #dcdcdc; border-right: 1px solid #a5a5a5; }
  nx-icon { height: 48.100px; margin-left: 2px; }
  .on { background: #fff; border: 1px solid #a5a5a5; border-right: 0; width: 35px; margin: 0 -1px 0 2px; height: 47px; display: flex; align-items: center; }
  .on nx-icon { margin-left: -1px; }
`, `<nx-icon name="gear" size="17" cell="33" style="height:34px"></nx-icon><nx-icon name="asm" size="22" cell="36" style="height:50px"></nx-icon>${ic("bracket", 24, 36)}
  <div class="on">${ic("opnav", 25, 36)}</div>
  ${["table", "machtool", "dep", "pmi", "measure", "globe", "clock", "tools", "machout", "wand1", "wand2"].map(n => ic(n, 24, 36)).join("")}`);

define("nx-tree-row", `
  :host { display: flex; align-items: center; height: 23px; border-bottom: 1px solid #e9e9e9; font-size: 15px; }
`, `<slot></slot>`);

define("nx-navigator", `
  :host { display: flex; flex-direction: column; width: 236px; background: #fff; font-size: 15px; color: #222; }
  .head { display: flex; align-items: center; height: 28px; padding: 0 13px 0 5px; gap: 4px; margin-bottom: 2px; }
  .head span { flex: 1; color: #000; }
  .bar { display: flex; height: 32px; margin: 5px 0 2px 12px; }
  .bar span { width: 30px; height: 30px; display: flex; justify-content: center; border: 1px solid transparent; }
  .bar .hl { background: #cde4ec; } .bar .box { border-color: #c0c0c0; }
  .tree { width: 204px; margin-left: 12px; border: 2px solid #e3e3e3; border-bottom-width: 1px; height: 720px; display: flex; flex-direction: column; }
  .th { background: #efefef; height: 23px; line-height: 24px; padding-left: 6px; border-bottom: 1px solid #ccc; }
  .rows { height: 674px; overflow: hidden; }
  .exp { width: 9px; height: 9px; border: 1px solid #bbb; margin: 0 7px 0 4px; display: flex; align-items: center; justify-content: center; }
  .exp::before { content: ""; width: 7px; height: 1px; background: #333; }
  .twig { width: 9px; height: 24px; margin-left: 28px; border-left: 1px dotted #999; background: linear-gradient(90deg, #999 50%, transparent 50%) 0 12px / 2px 1px repeat-x; }
  .last { height: 12px; margin-bottom: 12px; background-position: 0 11px; }
  .sb { height: 20px; background: #efefef; display: flex; align-items: center; }
  .sb i { width: 21px; height: 19px; background: #c9c9c9; }
`, `<div class="head">${ic("opnav", 17)}<span>工序导航器</span>${ic("maxbox", 13)}</div>
  <div class="bar"><span>${ic("vprog", 25)}</span><span class="hl" style="margin-left:2px">${ic("vtool", 25)}</span><span style="margin-left:2px">${ic("vgeom", 25)}</span><span style="margin-left:2px">${ic("vmethod", 25)}</span><span class="box" style="margin-left:4px">${ic("winadd", 24)}</span><span class="box" style="margin-left:4px">${ic("winx", 24)}</span></div>
  <div class="tree"><div class="th">标题</div><div class="rows">
    <nx-tree-row style="background:#fff"><span class="exp"></span><span style="font-size:15.700px">GENERIC_MACHINE</span></nx-tree-row>
    <nx-tree-row style="background:#fafafa"><span class="twig"></span>${ic("folder", 16, 17)}<span style="margin-left:2px">未用项</span></nx-tree-row>
    ${["M16", "BA6", "BA10"].map((t, i) => `<nx-tree-row style="background:${i % 2 ? "#fafafa" : "#fff"}"><span class="twig${i === 2 ? " last" : ""}"></span>${ic("tooli", 16, 17)}<span style="margin-left:2px;font-size:15.500px">${t}</span></nx-tree-row>`).join("")}
    ${Array.from({ length: 23 }, (_, i) => `<nx-tree-row style="background:${i % 2 ? "#fff" : "#fafafa"}"></nx-tree-row>`).join("")}
  </div><div class="sb"><svg width="21" height="20"><path d="M12 6l-5 4 5 4" fill="none" stroke="#333" stroke-width="2"/></svg><i></i><svg width="21" height="20" style="margin-left:auto"><path d="M8 6l5 4-5 4" fill="none" stroke="#333" stroke-width="2"/></svg></div></div>`);

define("nx-doc-tabs", `
  :host { display: flex; height: 28px; border-bottom: 2px solid #0a4a70; background: #fff; font-size: 15px; align-items: center; }
  .t { display: flex; align-items: center; gap: 4px; width: 103px; padding-left: 5px; color: #222; height: 28px; }
  .on { background: #005282; color: #fff; width: 166px; padding-left: 5px; }
`, `<div class="t">${ic("compass", 17)}发现中心</div><div class="t on">${ic("tabpart", 16)}<span style="width:109px;font-size:15.500px">1002.40.01.prt</span>${ic("tabdoc", 11)}${ic("close", 8, 12)}</div>`);

// bottom and rim edges of the tray, shared by several fills
const rimBack = "M90 400C90 370 110 358 150 345C215 322 305 285 345 212C362 180 357 150 365 125C375 97 410 85 445 85C485 87 508 100 525 130C560 198 640 265 750 296C820 318 870 322 920 325C950 330 968 345 990 378C1040 440 1130 500 1250 520C1310 530 1370 524 1410 530C1450 540 1465 570 1462 590";
const rimFront = "C1462 610 1445 628 1415 638C1350 655 1290 690 1240 735C1210 760 1198 800 1195 845C1182 880 1150 898 1105 898C1070 898 1045 890 1030 868C1000 825 970 790 910 745C840 700 740 665 642 661C620 660 605 655 590 640C565 615 550 590 500 555C420 500 300 460 168 456C110 450 90 430 90 400Z";
const inner = "M100 402C100 376 115 363 155 351C220 330 310 295 354 216C368 185 365 155 373 130C382 103 415 92 445 92C482 94 500 108 517 136C553 205 636 273 746 304C816 325 868 329 918 332C945 337 960 352 982 385C1034 448 1125 508 1246 528C1308 538 1368 531 1406 537C1440 546 1455 570 1452 590C1452 606 1440 620 1410 631C1345 648 1284 684 1234 728C1202 756 1190 796 1186 841C1174 873 1148 890 1105 890C1074 890 1054 881 1038 860C1008 818 976 782 914 737C842 692 742 658 642 654C624 653 612 648 598 634C573 608 557 583 506 548C424 493 302 453 170 449C118 444 100 426 100 402Z";
const baseIn = "C1496 838 1470 862 1428 872C1345 893 1250 955 1230 1030C1215 1075 1228 1100 1195 1122C1150 1150 1060 1150 1025 1115C1000 1090 985 1065 960 1035C895 960 800 912 642 907C602 903 582 893 557 863C530 828 500 788 450 757C370 713 280 698 168 700C110 698 62 670 62 625";
const baseOut = "C1500 850 1470 880 1430 891C1350 910 1260 965 1235 1035C1218 1085 1228 1110 1200 1134C1160 1165 1060 1167 1020 1127C1000 1100 985 1075 960 1045C895 970 800 924 642 918C602 915 580 905 555 875C530 842 500 802 450 771C370 725 280 710 168 712C110 710 60 685 60 640";
const grad = (id, x1, x2, ...s) => `<linearGradient id="${id}" gradientUnits="userSpaceOnUse" x1="${x1}" x2="${x2}" y1="0" y2="0">${s.map(([o, c]) => `<stop offset="${o}" stop-color="${c}"/>`).join("")}</linearGradient>`;

define("nx-viewport", `
  :host { display: block; position: relative; height: 770px; width: 1605px; margin: 1px 0 0 2px; border-bottom: 1px solid #777; overflow: hidden; }
  svg { display: block; }
  nx-ime { position: absolute; left: 1032px; top: 275px; }
`, `<svg width="1606" height="771" viewBox="277 235 1606 771">
  <defs>
    <linearGradient id="bg" x1="0" y1="0" x2="0" y2="1"><stop offset="0" stop-color="#222425"/><stop offset=".5" stop-color="#404143"/><stop offset=".75" stop-color="#525355"/><stop offset="1" stop-color="#565759"/></linearGradient>
    <linearGradient id="halo" x1="0" y1="0" x2="1" y2="1"><stop offset=".1" stop-color="#6cc8dc"/><stop offset=".5" stop-color="#b9a4ea"/><stop offset=".8" stop-color="#f09ac6"/></linearGradient>
    ${grad("wa", 60, 168, [0, "#008a00"], [.45, "#009e00"], [.7, "#00bc00"], [.88, "#1edc1e"], [1, "#0bd00b"])}
    ${grad("wb", 168, 580, [0, "#00d400"], [.15, "#00d200"], [.35, "#1edf22"], [.48, "#00c800"], [.68, "#009c00"], [1, "#008f00"])}
    ${grad("wc", 555, 642, [0, "#008400"], [.4, "#00a000"], [.75, "#18d81a"], [1, "#00ce00"])}
    ${grad("wd", 642, 1025, [0, "#00da00"], [.2, "#1ee622"], [.3, "#00d400"], [.45, "#00ac00"], [.75, "#009a00"], [1, "#008400"])}
    ${grad("we", 1003, 1225, [0, "#008200"], [.22, "#00a000"], [.38, "#24ec26"], [.55, "#00d800"], [.75, "#00b400"], [1, "#009000"])}
    ${grad("wf", 1195, 1428, [0, "#00bc00"], [.25, "#00d600"], [1, "#00da00"])}
    ${grad("wg", 1415, 1495, [0, "#00cc00"], [1, "#00a600"])}
    ${grad("ia", 90, 350, [0, "#009000"], [.3, "#00a800"], [.8, "#00aa00"], [1, "#008c00"])}
    ${grad("ib", 350, 540, [0, "#009600"], [.35, "#00ac00"], [.6, "#009c00"], [1, "#007e00"])}
    ${grad("ic", 520, 908, [0, "#008a00"], [.4, "#009a00"], [1, "#008a00"])}
    ${grad("id", 908, 985, [0, "#009400"], [.5, "#009a00"], [1, "#007c00"])}
    ${grad("ie", 960, 1460, [0, "#009200"], [.7, "#009c00"], [1, "#00a200"])}
    <clipPath id="base"><path d="M62 625L90 395V300H1462V590L1495 790${baseIn}Z"/></clipPath>
    <clipPath id="well"><path d="${inner}"/></clipPath>
  </defs>
  <rect x="277" y="235" width="1606" height="771" fill="url(#bg)"/>

  <g transform="translate(500 370) scale(.4847 .3333)" stroke-linejoin="round">
    <path d="${rimBack}L1495 800${baseOut}L90 400Z" fill="#06a814" stroke="#064d0a" stroke-width="2"/>
    <g clip-path="url(#base)">
      <path d="M90 380L168 456V720H50V640z" fill="url(#wa)"/>
      <path d="M168 440H590V640L555 900H168z" fill="url(#wb)"/>
      <path d="M580 600H642V930H555V878z" fill="url(#wc)"/>
      <path d="M642 640H1035L1027 866 1003 1110H642z" fill="url(#wd)"/>
      <path d="M1026 860H1193L1225 1070V1180H1000V1105z" fill="url(#we)"/>
      <path d="M1192 845L1200 640H1415L1430 900 1225 1090z" fill="url(#wf)"/>
      <path d="M1415 630L1462 580 1500 800V900H1428z" fill="url(#wg)"/>
    </g>
    <path d="M62 625L60 640M1495 790${baseIn}" fill="none" stroke="#035a06" stroke-width="2"/>
    <path d="${rimBack}${rimFront}" fill="#16b81c" stroke="#055c0a" stroke-width="2.500"/>
    <path d="${rimBack}" fill="none" stroke="#2bce36" stroke-width="4" transform="translate(0 4)"/>
    <g clip-path="url(#well)">
      <path d="M80 300h1400v700H80z" fill="#009400"/>
      <path d="M80 250L370 120 345 350 290 480H80z" fill="url(#ia)"/>
      <path d="M368 60H515L540 340H345z" fill="url(#ib)"/>
      <path d="M515 60L908 280V560H640L540 330z" fill="url(#ic)"/>
      <path d="M906 300H960L988 600H912z" fill="url(#id)"/>
      <path d="M960 330L1470 500V800H1200L988 580z" fill="url(#ie)"/>
      <path d="M142 340V430M368 140L345 350M515 125L541 330M906 320L912 532M961 355L988 568M1383 525V640" fill="none" stroke="#035a06" stroke-width="1.800"/>
      <path d="M295 462C332 430 335 385 350 340C370 305 420 294 465 294C505 296 530 315 550 345C570 380 590 405 620 425C640 405 655 397 675 397C700 400 715 430 730 460C745 490 755 500 770 508C820 522 870 528 920 533C960 538 975 550 990 568C1020 605 1045 635 1080 655C1100 635 1115 622 1135 620C1165 622 1185 660 1200 685C1215 705 1225 715 1245 720L1210 900H1000L500 620z" fill="#00db00" stroke="#02720a" stroke-width="2"/>
      <path d="M492 536L620 425 632 418 508 546zM955 766L1078 655 1092 644 970 776z" fill="#00c400"/>
      <path d="M508 546L640 414M970 776L1100 638" stroke="#0ab80a" stroke-width="7"/>
      <path d="M492 536L620 425M502 542L628 428M568 600L722 456M620 645L768 508M955 766L1078 653M967 772L1085 656M1020 835L1195 673M1070 886L1245 722" fill="none" stroke="#04660a" stroke-width="1.800"/>
      <path d="M305 447C250 430 190 432 150 430C125 425 120 400 130 380C150 362 190 355 230 338C290 312 340 275 368 225C395 185 382 160 402 125C420 105 465 105 487 122C510 165 560 220 640 265C730 312 830 340 910 347C940 350 950 370 975 402C1030 460 1120 520 1230 543C1300 556 1350 548 1390 552C1425 562 1435 590 1415 607C1390 625 1330 640 1280 670C1250 688 1240 700 1230 712" fill="none" stroke="#1ec926" stroke-width="2"/>
    </g>
    <path d="${inner}" fill="none" stroke="#05700a" stroke-width="2"/>
    <path d="M168 456V712M580 640L555 878M642 661V918M1027 868L1003 1106M1192 845L1225 1070M1415 638L1430 890" fill="none" stroke="#04500a" stroke-width="1.800"/>
  </g>

  <g stroke-width="1.500" fill="none">
    <path d="M876 612V530" stroke="#1440a8" stroke-width="2"/><path d="M877 613L935 576" stroke="#bfe8c0" stroke-width="2"/><path d="M877 613L955 637" stroke="#d9c99a" stroke-width="2"/>
  </g>
  <path d="M876 520l4.500 20h-9zM876 568l3 16-3 8-3-8zM876 584h1.500v12h-1.500z" fill="#0a2fae"/>
  <path d="M939 572l-9 10-5-6zM908 592l-8 8-3-4z" fill="#c8e8c8"/><path d="M961 640l-19-1 3-7zM917 626l-13-5 2-3z" fill="#f2ad8a"/>
  <g font-family="Liberation Sans" font-size="13">
    <text x="880" y="519" fill="#1165b8">ZM</text><text x="881" y="561" fill="#107ba0">ZC</text>
    <text x="919" y="569" fill="#2c9a2f">YM</text><text x="892" y="587" fill="#0c8a20">YC</text>
    <text x="904" y="642" fill="#b07800">XC</text><text x="942" y="654" fill="#c07000">XM</text>
  </g>

  <g fill="none" stroke="#8e7792" stroke-width="1.300"><path d="M350.500 886L374 870.500 407 881 383.500 897zM350.500 886V922L383 932.500 407 916.500V881M383.500 897V932.500"/></g>
  <path d="M376 884V856h-4l6-17 5 17h-3v28z" fill="#0a2fc4"/>
  <path d="M408 878l5-4-1-3 9-4-7 11-2-2-4 5z" fill="#2c9e38"/>
  <path d="M395 904l25 6v-2l17 11-18-1v-3l-25-8z" fill="#d23a2a" stroke="#d23a2a"/>
  <g font-family="Liberation Sans" font-size="12"><text x="374" y="835" fill="#2040d0">Z</text><text x="422" y="875" fill="#2c9e38">Y</text><text x="440" y="927" fill="#d23a2a">X</text></g>

  <circle cx="512.500" cy="334.500" r="25.500" fill="#a39a10"/>
  <g fill="none" stroke="#111" stroke-width="1.200"><circle cx="512.500" cy="334.500" r="9.500"/><path d="M511.500 319v31M514 319v31M497 333.500h31M497 336h31"/></g>
  <path d="M512.700 319v31M497 334.700h31" stroke="#d8d49a" stroke-width="1"/>

  <circle cx="1790" cy="457" r="27.500" fill="#707173" stroke="url(#halo)" stroke-width="5"/>
  <g stroke="#080808" stroke-width="5" fill="none"><path d="M1777 446.500h8l5 3M1788 451l7-4.500h8M1774 453l9 5v5M1805 453l-9 5-3 4M1786 464v10M1794 474V462"/></g>
</svg><nx-ime></nx-ime>`);

define("nx-ime", `
  :host { display: flex; align-items: center; }
  .logo { position: relative; z-index: 1; margin-right: -9px; margin-top: -4px; }
  .bar { display: flex; align-items: center; height: 31px; width: 215px; padding-left: 4px; background: #fff; border: 1px solid #c5d8e8; border-radius: 2px; box-sizing: content-box; color: #0f6fd0; font-weight: bold; font-size: 18px; }
  .bar span { width: 30px; text-align: center; }
`, `<div class="logo">${ic("sogou", 42)}</div><div class="bar"><span style="padding-left:4px">中</span><span>°,</span>${ic("imic", 18, 30)}${ic("ikey", 19, 31)}${ic("ishirt", 19, 30)}${ic("iapps", 18, 30)}${ic("iface", 25, 28)}</div>`);

define("nx-side-rail", `
  :host { display: flex; flex-direction: column; align-items: center; flex: 1; padding: 9px 2px 0 0; border-left: 1px solid #ccc; background: #fff; }
  nx-icon { height: 31.900px; }
  hr { width: 28px; border: 0; border-top: 1px solid #ccc; margin: 5px 0; }
  i { margin: auto 10px 7px auto; border: 4px solid transparent; border-right: 5px solid #111; border-left: 0; }
`, ["newtool", "newop", "machine", "solid", "fit", "orient", "play", "postcfg", "copyop", "noeye"].map(n => ic(n, 24)).join("") + "<hr><i></i>");

define("nx-status", `
  :host { display: flex; justify-content: center; align-items: center; height: 23px; padding-right: 76px; font-weight: 500; color: #111; padding-left: 150px; box-sizing: border-box; border-top: 1px solid #b5b5b5; background: #fff; }
`, `<slot></slot>`);

define("win-taskbar", `
  :host { display: flex; height: 50px; color: #eef2f5; background: linear-gradient(90deg, #21373f, #1d2e40 60%, #1a2848); box-shadow: inset 0 -2px #123a1c; font-size: 15px; }
  .start { width: 60px; display: flex; justify-content: center; }
  .find { box-sizing: border-box; width: 430px; background: #f1f1f1; color: #333; font-size: 19px; display: flex; align-items: center; border-top: 1px solid #b5c4b8; border-bottom: 1px solid #7cc47c; margin-right: 3px; }
  .app { width: 61.900px; display: flex; justify-content: center; align-items: center; box-sizing: border-box; }
  .run { background: linear-gradient(#7ccbe0, #7ccbe0) center bottom / 51px 3px no-repeat; }
  .cur { background: #4b5a64; border-bottom: 3px solid #7ccbe0; padding-top: 3px; }
  .tray { display: flex; align-items: center; flex: 1; }
  .tray > * { flex: none; }
  .more { font-size: 18px; margin-top: -26px; width: 30px; text-align: center; }
  .time { width: 100px; text-align: center; font-size: 14.500px; line-height: 23px; }
  .n { position: relative; width: 32px; }
  .n b { position: absolute; left: 12px; top: 10px; width: 19px; height: 19px; border: 1px solid #999; border-radius: 10px; background: #222c38; font-size: 13px; line-height: 19px; text-align: center; color: #fff; }
`, `<div class="start">${ic("start", 20)}</div>
  <div class="find">${ic("search", 20, 50)}<span>在此键入进行搜索</span></div>
  <div class="app run">${ic("edge", 31)}</div>
  ${["explorer", "store", "outlook", "pdf", "hexcube", "bird", "wps"].map(n => `<div class="app">${ic(n, 30)}</div>`).join("")}
  <div class="app run">${ic("cmd", 29)}</div><div class="app cur">${ic("nx", 30)}</div>
  <div class="tray"><span style="margin-left:141px;width:38px">Apps</span><span class="more">»</span><span style="width:92px">Quick lanuch</span><span class="more">»</span>
    <nx-icon name="news" size="30" cell="32" style="margin-left:30px"></nx-icon><span style="width:48px;margin-left:10px;font-size:16px">7°C</span>
    <nx-icon name="caretup" size="16" cell="30" style="margin-left:3px"></nx-icon>${ic("tmic", 21, 30)}${ic("wifi", 17, 30)}${ic("vol", 21, 30)}<span style="width:30px;text-align:center;font-size:17px">中</span>
    ${ic("sogou", 21, 40)}<div class="time">16:14<br>2025/4/6</div><div class="n" style="margin-left:10px">${ic("notif", 22, 28)}<b>2</b></div></div>`);

// translucent oval seal that floats over the window corner
define("nx-seal", `
  :host { position: absolute; left: 1788px; top: 1px; }
  svg { display: block; }
`, `<svg width="118" height="232" viewBox="0 0 118 232">
  <defs><filter id="grain" x="0" y="0" width="100%" height="100%"><feTurbulence type="fractalNoise" baseFrequency=".45" numOctaves="3" seed="4" result="n"/>
    <feColorMatrix in="n" values="0 0 0 0 0  0 0 0 0 0  0 0 0 0 0  0 0 0 -14 8"/><feComposite in="SourceGraphic" operator="in"/></filter></defs>
  <path d="M58 1C76 1 91 22 103 55C113 82 118 110 115 140C113 178 95 222 60 230C34 231 18 205 8 172C-1 140 0 105 7 75C13 40 31 2 58 1Z" fill="#bc0a1c" opacity=".3"/>
  <path d="M58 1C76 1 91 22 103 55C113 82 118 110 115 140C113 178 95 222 60 230C34 231 18 205 8 172C-1 140 0 105 7 75C13 40 31 2 58 1Z" fill="#bc0a1c" opacity=".32" filter="url(#grain)"/>
  <g fill="none" stroke="#fff" stroke-width="5" opacity=".7" stroke-linecap="round" stroke-linejoin="round">
    <path d="M14 54q6 8 15 0M8 66q12-2 26-12M22 44v34q-4 22-14 32M22 76q6 16 6 40M60 19l-18 3v18l14-4v22M42 52v66M34 66h12M53 40v78"/>
    <path d="M74 25v37M65 44h26M65 44v20M90 42v22M60 70h33M74 60v26M97 52q-13 12-11 58M106 62v45q0 12-7 20q-10-2-8-18"/>
    <path d="M58 112v-9h32v8M68 103v14q-2 12-9 20M80 103v12l-9 11M70 117l16 21"/>
    <path d="M8 137l20-3q-1 12-18 18M6 160l18-7v22l-16 5M24 175v10l-8 24M32 130h18v34M30 147q14-9 24-7M42 138v78M30 172h22M57 151q0-6 6-6h34q8 0 8 7v26q0 6-7 6H63q-6 0-6-6zM58 165h46"/>
  </g></svg>`);

define("nx-watermark", `
  :host { position: absolute; left: 1370px; top: 970px; width: 550px; height: 110px; }
  svg { display: block; overflow: visible; }
  text { font-weight: 300; fill: #dc2a18; }
`, `<svg width="550" height="110" viewBox="0 0 550 110">
  <g transform="translate(53 0) skewX(-17)"><text x="0" y="90" font-family="Noto Sans CJK SC" font-size="67" textLength="207" lengthAdjust="spacingAndGlyphs">智利迅</text><text x="208" y="89" font-family="Open Sans" font-size="70" textLength="309" lengthAdjust="spacingAndGlyphs">-04/06/25</text></g></svg>`);
</script>
</body>
</html>
